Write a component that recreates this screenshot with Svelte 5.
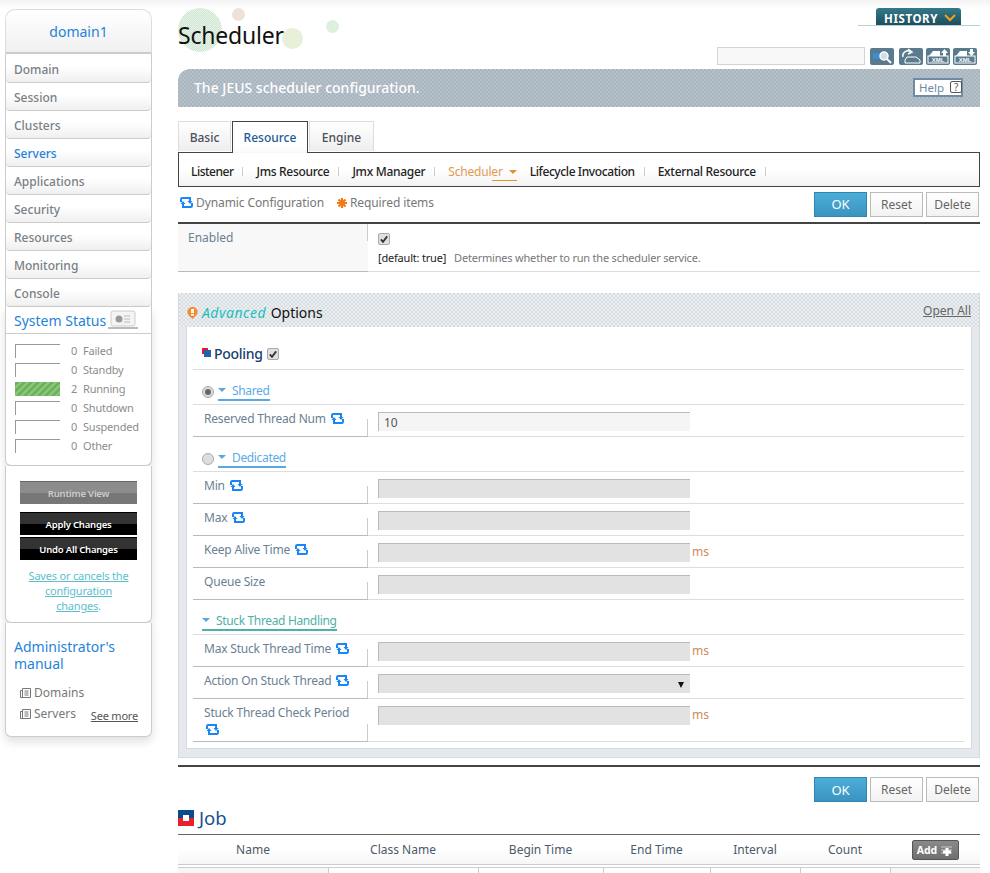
<script>
    const menu = ["Domain", "Session", "Clusters", "Servers", "Applications", "Security", "Resources", "Monitoring", "Console"];
    const statuses = [
        { count: 0, label: "Failed" },
        { count: 0, label: "Standby" },
        { count: 2, label: "Running", on: true },
        { count: 0, label: "Shutdown" },
        { count: 0, label: "Suspended" },
        { count: 0, label: "Other" }
    ];
    const subTabs = ["Listener", "Jms Resource", "Jmx Manager", "Scheduler", "Lifecycle Invocation", "External Resource"];
    const dedicated = [
        { label: "Min", dyn: true },
        { label: "Max", dyn: true },
        { label: "Keep Alive Time", dyn: true, unit: "ms" },
        { label: "Queue Size" }
    ];
    const columns = ["Name", "Class Name", "Begin Time", "End Time", "Interval", "Count"];
</script>

{#snippet sync()}
    <svg class="sync" viewBox="0 0 13 11" aria-hidden="true">
        <path d="M1 5V2.200Q1 1 2.200 1H10V4" fill="none" stroke="#1a86f5" stroke-width="2" />
        <path d="M12 6V8.800Q12 10 10.800 10H3V7" fill="none" stroke="#1a86f5" stroke-width="2" />
        <path d="M7.500 4H12.500L10 7ZM0.500 7H5.500L3 4Z" fill="#1a86f5" />
    </svg>
{/snippet}

{#snippet actions()}
    <div class="actions">
        <button class="btn ok">OK</button>
        <button class="btn">Reset</button>
        <button class="btn">Delete</button>
    </div>
{/snippet}

{#snippet check()}
    <span class="check">
        <svg viewBox="0 0 11 11" aria-hidden="true"><path d="M2 6l2.400 2.600L9 2.600" fill="none" stroke="#333" stroke-width="2" /></svg>
    </span>
{/snippet}

{#snippet docIcon()}
    <svg viewBox="0 0 11 10" aria-hidden="true"><path d="M0.500 2.500h2v7h-2zM2.500 0.500h8v9h-8zM4.500 3h4M4.500 5h4M4.500 7h4" fill="none" stroke="#777" /></svg>
{/snippet}

{#snippet xmlLabel()}
    <rect x="2" y="8" width="20" height="7" fill="#5a7a8e" stroke="#fff" />
    <text x="12" y="14" text-anchor="middle" font-size="6" font-weight="700" fill="#fff">XML</text>
{/snippet}

{#snippet field(label, dyn, unit, disabled = true, value = "", select = false)}
    <div class="row">
        <div class="label">
            <span>{label}</span>
            {#if dyn}{@render sync()}{/if}
        </div>
        <div class="value">
            <div class="input" class:disabled>
                {value}
                {#if select}<span class="caret"></span>{/if}
            </div>
            {#if unit}<span class="unit">{unit}</span>{/if}
        </div>
    </div>
{/snippet}

<div class="page">
    <aside class="side">
        <div class="domain">domain1</div>
        <nav>
            {#each menu as item}
                <div class="item" class:current={item === "Servers"}>{item}</div>
            {/each}
        </nav>
        <section class="panel status">
            <div class="status-head">
                <span>System Status</span>
                <svg viewBox="0 0 30 20" width="30" height="20" aria-hidden="true">
                    <rect x="3" y="1" width="24" height="15" rx="2" fill="#f4f4f4" stroke="#ccc" />
                    <circle cx="11" cy="9" r="3.500" fill="#999" />
                    <path d="M16 6h6M16 9h6M16 12h6" stroke="#bbb" />
                    <path d="M0 18h30" stroke="#bbb" stroke-width="2" />
                </svg>
            </div>
            <ul>
                {#each statuses as s}
                    <li>
                        <span class="bar" class:on={s.on}></span>
                        <span class="count">{s.count}</span>
                        <span>{s.label}</span>
                    </li>
                {/each}
            </ul>
        </section>
        <section class="panel changes">
            <div class="cmd grey">Runtime View</div>
            <div class="cmd black">Apply Changes</div>
            <div class="cmd black">Undo All Changes</div>
            <p><u>Saves or cancels the configuration changes</u>.</p>
        </section>
        <section class="panel manual">
            <h3>Administrator's manual</h3>
            <div class="doc">
                {@render docIcon()}
                Domains
            </div>
            <div class="doc last">
                <span class="doc-name">
                    {@render docIcon()}
                    Servers
                </span>
                <u class="more">See more</u>
            </div>
        </section>
    </aside>

    <main>
        <header>
            <div class="dot d1"></div>
            <div class="dot d2"></div>
            <div class="dot d3"></div>
            <div class="dot d4"></div>
            <h1>Scheduler</h1>
            <div class="head-right">
                <div class="history-wrap">
                    <div class="history">
                        HISTORY
                        <svg viewBox="0 0 12 8" width="12" height="8" aria-hidden="true"><path d="M1 1l5 5 5-5" fill="none" stroke="#f2a01e" stroke-width="2" /></svg>
                    </div>
                </div>
                <div class="tools">
                    <div class="search"></div>
                    <svg class="tool first" viewBox="0 0 24 17" aria-hidden="true">
                        <rect width="24" height="17" rx="2" fill="#5a7a8e" />
                        <rect x="3" y="5" width="7" height="6" fill="#3a8fd0" />
                        <circle cx="14" cy="8" r="4" fill="#cfe0ea" stroke="#fff" stroke-width="1.500" />
                        <path d="M17 11l4 4" stroke="#fff" stroke-width="2" />
                    </svg>
                    <svg class="tool" viewBox="0 0 24 17" aria-hidden="true">
                        <rect width="24" height="17" rx="2" fill="#5a7a8e" />
                        <path d="M4 9a5 5 0 0 1 8-5M9 1l4 3-4 2" fill="none" stroke="#fff" stroke-width="1.500" />
                        <path d="M8 9h9l4 3v3H6v-3z" fill="#5a7a8e" stroke="#fff" />
                    </svg>
                    <svg class="tool" viewBox="0 0 24 17" aria-hidden="true">
                        <rect width="24" height="17" rx="2" fill="#5a7a8e" />
                        <path d="M3 8l4-5h7v5M17 8V5h-2l3.500-4L22 5h-2v3" fill="#fff" />
                        {@render xmlLabel()}
                    </svg>
                    <svg class="tool" viewBox="0 0 24 17" aria-hidden="true">
                        <rect width="24" height="17" rx="2" fill="#5a7a8e" />
                        <path d="M3 8l4-5h7v5M17 1h3v3h2l-3.500 4L15 4h2z" fill="#fff" />
                        {@render xmlLabel()}
                    </svg>
                </div>
            </div>
        </header>

        <div class="banner">
            <span>The JEUS scheduler configuration.</span>
            <div class="help">Help <span class="q">?</span></div>
        </div>

        <div class="tabs">
            <div class="tab basic">Basic</div>
            <div class="tab active">Resource</div>
            <div class="tab engine">Engine</div>
        </div>
        <div class="subtabs">
            {#each subTabs as t}
                <div class="sub" class:sel={t === "Scheduler"}>
                    {#if t === "Scheduler"}
                        <span>{t}</span><span class="arrow"></span>
                    {:else}
                        <span>{t}</span><i></i>
                    {/if}
                </div>
            {/each}
        </div>

        <div class="legend-row">
            <div class="legend">
                {@render sync()}
                <span>Dynamic Configuration</span>
                <svg class="req" viewBox="0 0 10 10" aria-hidden="true"><path d="M5 0v10M0 5h10M1.500 1.500l7 7M8.500 1.500l-7 7" stroke="#f27a1a" stroke-width="2.200" /></svg>
                <span>Required items</span>
            </div>
            {@render actions()}
        </div>

        <div class="enabled">
            <div class="en-label">Enabled</div>
            <div class="en-value">
                {@render check()}
                <div class="hint"><b>[default: true]</b> &nbsp; Determines whether to run the scheduler service.</div>
            </div>
        </div>

        <section class="advanced">
            <div class="adv-head">
                <svg viewBox="0 0 11 13" width="11" height="13" aria-hidden="true">
                    <path d="M5.500 13L1.500 9A5 5 0 1 1 9.500 9Z" fill="#f28a2e" />
                    <rect x="4" y="3" width="3" height="4" fill="#fff" />
                    <rect x="4" y="8" width="3" height="1.500" fill="#fff" />
                </svg>
                <span class="adv-title"><em>Advanced</em> Options</span>
                <u class="open">Open All</u>
            </div>
            <div class="inner">
                <div class="pooling">
                    <span class="squares"><i></i><b></b></span>
                    <span class="pool-name">Pooling</span>
                    {@render check()}
                </div>

                <div class="group">
                    <span class="radio sel"></span>
                    <span class="group-title"><span class="down"></span>Shared</span>
                </div>
                {@render field("Reserved Thread Num", true, "", false, "10")}

                <div class="group">
                    <span class="radio"></span>
                    <span class="group-title"><span class="down"></span>Dedicated</span>
                </div>
                {#each dedicated as d}
                    {@render field(d.label, d.dyn, d.unit)}
                {/each}

                <div class="group">
                    <span class="group-title teal"><span class="down"></span>Stuck Thread Handling</span>
                </div>
                {@render field("Max Stuck Thread Time", true, "ms")}
                {@render field("Action On Stuck Thread", true, "", true, "", true)}
                <div class="tall">
                    {@render field("Stuck Thread Check Period", true, "ms")}
                </div>
            </div>
        </section>

        <div class="bottom-actions">
            {@render actions()}
        </div>

        <h2 class="job">
            <span class="job-icon"><i></i></span>
            Job
        </h2>
        <div class="table">
            {#each columns as c}
                <div class="th">{c}</div>
            {/each}
            <div class="th add-cell"><span class="add">Add
                <svg viewBox="0 0 13 13" width="13" height="13" aria-hidden="true">
                    <path d="M1 3h11M1 6h11M1 9h11" stroke="#ccc" />
                    <path d="M7 4v8M3 8h8" stroke="#fff" stroke-width="3" />
                </svg>
            </span></div>
            {#each [0, 1, 2, 3, 4, 5, 6] as i}
                <div class="td" class:shade={i === 0 || i === 6}></div>
            {/each}
        </div>
    </main>
</div>

<style>
    :global(body) {
        background: #fff;
        font-family: "Noto Sans", "Open Sans", sans-serif;
        font-size: 12px;
        color: #666;
    }

    .page {
        display: flex;
        height: 873px;
        overflow: hidden;
        padding: 9px 10px 0 5px;
        box-sizing: border-box;
        background: linear-gradient(#f3f3f3, #fff 9px);
    }

    .side {
        width: 147px;
        flex: none;
        margin-right: 26px;
    }

    .domain {
        height: 42px;
        line-height: 43px;
        text-align: center;
        font-size: 14px;
        color: #1f83d8;
        border: 1px solid #ddd;
        border-bottom: 2px solid #ccc;
        border-radius: 10px 10px 0 0;
        background: linear-gradient(#fff, #f0f0f0);
    }

    nav {
        padding-top: 1px;
        border-left: 1px solid #ccc;
        border-right: 1px solid #ccc;
    }

    .item {
        height: 27px;
        line-height: 29px;
        padding-left: 8px;
        font-weight: 500;
        color: #7a7f85;
        background: linear-gradient(#fff 40%, #f0f0f0);
        border-bottom: 1px solid #ccc;
        border-radius: 0 0 4px 4px;
    }

    .item.current {
        color: #1f83d8;
    }

    .panel {
        background: #fff;
        border: 1px solid #ccc;
        border-top: none;
        border-radius: 0 0 6px 6px;
        box-shadow: 0 5px 10px rgba(0, 0, 0, 0.12);
        position: relative;
    }

    .status-head {
        display: flex;
        align-items: center;
        gap: 2px;
        height: 26px;
        padding-left: 8px;
        font-size: 14px;
        color: #1f83d8;
        border-bottom: 1px solid #ccc;
    }

    ul {
        margin: 0;
        padding: 7px 0 10px 9px;
        list-style: none;
    }

    li {
        display: flex;
        align-items: center;
        height: 19px;
        font-size: 11px;
        letter-spacing: -0.2px;
        color: #8c8c8c;
    }

    .bar {
        width: 45px;
        height: 14px;
        box-sizing: border-box;
        border-top: 1px solid #999;
        border-left: 1px solid #999;
        margin-right: 11px;
    }

    .bar.on {
        border: none;
        background: repeating-linear-gradient(135deg, #6cb35c 0 3px, #8cc67e 3px 5px);
    }

    .count {
        width: 12px;
    }

    .changes {
        height: 157px;
        padding: 15px 14px 0;
        box-sizing: border-box;
        text-align: center;
    }

    .cmd {
        width: 117px;
        height: 22px;
        line-height: 24px;
        font-size: 9.500px;
        letter-spacing: -0.2px;
        font-weight: 600;
        color: #fff;
        white-space: nowrap;
    }

    .cmd.grey {
        color: #ccc;
        margin-bottom: 8px;
        border-top: 1px solid #666;
        background: linear-gradient(#8c8c8c 50%, #777 50%);
    }

    .cmd.black {
        margin-bottom: 2px;
        border-top: 1px solid #000;
        background: linear-gradient(#333 50%, #000 50%);
    }

    .changes p {
        margin: 8px 6px 0;
        font-size: 11px;
        letter-spacing: -0.2px;
        line-height: 15px;
        color: #5cc0cc;
    }

    .manual {
        height: 114px;
        padding: 15px 8px 0 8px;
        box-sizing: border-box;
    }

    h3 {
        margin: 0 0 10px;
        font-size: 14px;
        font-weight: 400;
        line-height: 17px;
        color: #1f83d8;
    }

    .doc {
        display: flex;
        align-items: center;
        gap: 3px;
        height: 21px;
        padding-left: 6px;
        color: #777;
    }

    .doc svg {
        width: 11px;
        height: 10px;
    }

    .doc.last {
        justify-content: space-between;
        padding-right: 5px;
    }

    .doc-name {
        display: flex;
        align-items: center;
        gap: 3px;
    }

    .more {
        font-size: 11px;
        letter-spacing: -0.2px;
        color: #555;
        margin-top: 4px;
    }

    main {
        width: 802px;
        flex: none;
    }

    header {
        position: relative;
        display: flex;
        justify-content: space-between;
        height: 60px;
    }

    .dot {
        position: absolute;
        border-radius: 50%;
    }

    .d1 {
        left: 0;
        top: -1px;
        width: 44px;
        height: 44px;
        background: repeating-conic-gradient(#cde6d2 0 25%, #e8f4ea 0 50%) 0 0 / 2px 2px;
    }

    .d2 {
        left: 54px;
        top: -1px;
        width: 13px;
        height: 13px;
        background: #eee2d8;
    }

    .d3 {
        left: 104px;
        top: 19px;
        width: 21px;
        height: 21px;
        background: #e8f0da;
    }

    .d4 {
        left: 148px;
        top: 11px;
        width: 13px;
        height: 13px;
        background: #ddf0dd;
    }

    h1 {
        position: relative;
        margin: 8px 0 0;
        font-size: 23px;
        letter-spacing: -0.2px;
        font-weight: 400;
        line-height: 36px;
        color: #111;
    }

    .head-right {
        display: flex;
        flex-direction: column;
        align-items: flex-end;
    }

    .history-wrap {
        width: 122px;
        margin-top: -1px;
        padding-left: 18px;
        box-sizing: border-box;
        border-bottom: 1px solid #b5d3d3;
    }

    .history {
        display: flex;
        align-items: center;
        gap: 6px;
        width: 85px;
        height: 17px;
        box-sizing: border-box;
        padding: 3px 0 0 8px;
        border-radius: 3px 3px 0 0;
        background: linear-gradient(#347a8a, #1e4d5e);
        color: #fff;
        font-size: 11.500px;
        font-weight: 700;
        letter-spacing: 0.6px;
    }

    .tools {
        display: flex;
        align-items: center;
        gap: 3px;
        margin-top: 21px;
        padding-right: 3px;
    }

    .search {
        width: 148px;
        height: 18px;
        box-sizing: border-box;
        border: 1px solid #d4d4d4;
        background: #f8f8f8;
        margin-right: 2px;
    }

    .tool {
        width: 24px;
        height: 17px;
    }

    .tool text {
        font-family: "Liberation Sans", sans-serif;
    }

    .tool.first {
        margin-right: 2px;
    }

    .banner {
        display: flex;
        align-items: center;
        justify-content: space-between;
        height: 38px;
        padding: 0 17px 2px 16px;
        box-sizing: border-box;
        border-radius: 12px 0 0 0;
        background: repeating-conic-gradient(#a8b4be 0 25%, #b6c1ca 0 50%) 0 0 / 4px 4px;
        color: #fff;
        font-size: 14px;
        font-weight: 500;
    }

    .help {
        display: flex;
        align-items: center;
        gap: 6px;
        width: 50px;
        height: 19px;
        box-sizing: border-box;
        padding-left: 4px;
        background: #fff;
        border: 2px solid #6f8ca6;
        color: #6f8ca6;
        font-size: 11.500px;
        font-weight: 400;
    }

    .q {
        flex: none;
        width: 12px;
        height: 12px;
        line-height: 10px;
        box-sizing: border-box;
        border: 1px solid #555;
        border-radius: 2px;
        text-align: center;
        font-size: 10px;
        color: #555;
    }

    .tabs {
        display: flex;
        gap: 1px;
        margin-top: 14px;
        position: relative;
        z-index: 1;
    }

    .tab {
        height: 30px;
        line-height: 31px;
        text-align: center;
        box-sizing: border-box;
        border: 1px solid #ddd;
        border-bottom: none;
        font-weight: 500;
        color: #4a4f5c;
        background: linear-gradient(#fff, #eee);
    }

    .basic {
        width: 53px;
    }

    .engine {
        width: 65px;
    }

    .tab.active {
        width: 76px;
        height: 32px;
        border: 1px solid #444;
        border-bottom: none;
        background: linear-gradient(#fff 80%, #f8f8f8);
        color: #1a5a96;
        margin-bottom: -1px;
    }

    .subtabs {
        display: flex;
        align-items: center;
        height: 35px;
        padding: 4px 0 0 12px;
        box-sizing: border-box;
        border: 1px solid #444;
        background: linear-gradient(#fff 50%, #f2f2f2);
        color: #222;
    }

    .sub {
        display: flex;
        align-items: center;
        white-space: nowrap;
        font-weight: 500;
        letter-spacing: -0.3px;
    }

    .sub:first-child {
        letter-spacing: -0.5px;
    }

    .sub:nth-child(5) {
        letter-spacing: -0.4px;
    }

    .sub i {
        width: 1px;
        height: 9px;
        margin: 0 13px 0 9px;
        background: #ccc;
    }

    .sub.sel {
        color: #e09a50;
        font-weight: 400;
        letter-spacing: -0.2px;
        margin-right: 13px;
    }

    .arrow {
        position: relative;
        width: 0;
        height: 0;
        margin-left: 6px;
        border: 4px solid transparent;
        border-top: 4px solid #e0922c;
        border-bottom: none;
    }

    .arrow::after {
        content: "";
        position: absolute;
        left: -21px;
        top: 6px;
        width: 25px;
        height: 1px;
        background: #e0922c;
    }

    .legend-row {
        display: flex;
        align-items: center;
        justify-content: space-between;
        height: 35px;
        padding: 0 1px 1px;
        box-sizing: border-box;
    }

    .legend {
        display: flex;
        align-items: center;
        gap: 3px;
        margin-top: -3px;
        letter-spacing: -0.1px;
        color: #777;
    }

    .req {
        width: 10px;
        height: 10px;
        margin-left: 10px;
    }

    .actions {
        display: flex;
        gap: 3px;
    }

    .btn {
        width: 53px;
        height: 25px;
        padding: 0;
        font: inherit;
        color: #666;
        background: linear-gradient(#fff, #f2f2f2);
        border: 1px solid #bbb;
    }

    .btn.ok {
        font-size: 13px;
        color: #fff;
        background: linear-gradient(#4caed8, #3a94c0);
        border-color: #2f86b0;
    }

    .enabled {
        display: flex;
        height: 50px;
        box-sizing: border-box;
        border-top: 2px solid #444;
        border-bottom: 1px solid #ddd;
    }

    .en-label {
        position: relative;
        width: 190px;
        padding: 5px 0 0 10px;
        box-sizing: border-box;
        background: #f8f8f8;
        color: #6a8094;
        border-bottom: 1px solid #bbb;
        margin-bottom: -1px;
    }

    .en-label::after {
        content: "";
        position: absolute;
        right: 0;
        top: 0;
        height: 17px;
        width: 1px;
        background: #ccc;
    }

    .en-value {
        padding: 9px 0 0 10px;
    }

    .check {
        display: block;
        width: 12px;
        height: 12px;
        box-sizing: border-box;
        border: 1px solid #aaa;
        border-radius: 2px;
        background: #e0e0e0;
    }

    .check svg {
        display: block;
        width: 10px;
        height: 10px;
    }

    .hint {
        margin-top: 5px;
        font-size: 11px;
        letter-spacing: -0.2px;
        color: #777;
        white-space: nowrap;
    }

    .hint b {
        font-weight: 400;
        color: #222;
    }

    .advanced {
        margin-top: 21px;
        height: 465px;
        box-sizing: border-box;
        border: 1px solid #d4dade;
        border-top: none;
        padding: 0 7px 7px;
        background: #e5e9ed;
    }

    .adv-head {
        display: flex;
        align-items: center;
        gap: 4px;
        height: 34px;
        margin: 0 -7px;
        padding: 4px 8px 0 8px;
        box-sizing: border-box;
        background: repeating-conic-gradient(#d8dee2 0 25%, #eceff1 0 50%) 0 0 / 4px 4px;
    }

    .adv-title {
        font-size: 14px;
        color: #111;
    }

    .adv-title em {
        margin-right: 1px;
        letter-spacing: 0.5px;
        color: #1cc0bc;
    }

    .open {
        margin: -4px 0 0 auto;
        color: #666;
    }

    .inner {
        height: 422px;
        padding: 0 7px 0 6px;
        box-sizing: border-box;
        background: #fff;
        border: 1px solid #d4dade;
        border-top: none;
    }

    .pooling {
        display: flex;
        align-items: center;
        gap: 4px;
        height: 43px;
        padding: 11px 0 0 9px;
        box-sizing: border-box;
        border-bottom: 1px solid #ddd;
        color: #16406e;
    }

    .pool-name {
        font-size: 14px;
        font-weight: 500;
        letter-spacing: -0.3px;
        margin-left: -1px;
    }

    .squares {
        position: relative;
        width: 9px;
        height: 9px;
        margin-top: -2px;
    }

    .squares i {
        position: absolute;
        left: 0;
        top: 0;
        width: 6px;
        height: 6px;
        background: #e01830;
    }

    .squares b {
        position: absolute;
        left: 2px;
        top: 2px;
        width: 7px;
        height: 7px;
        background: #1c66ae;
    }

    .group {
        display: flex;
        align-items: flex-end;
        gap: 4px;
        height: 35px;
        padding: 0 0 3px 9px;
        box-sizing: border-box;
        border-bottom: 1px solid #ddd;
    }

    .radio {
        width: 12px;
        height: 12px;
        margin-bottom: 3px;
        box-sizing: border-box;
        border: 1px solid #aaa;
        border-radius: 50%;
        background: #ddd;
        position: relative;
    }

    .radio.sel::after {
        content: "";
        position: absolute;
        left: 2px;
        top: 2px;
        width: 6px;
        height: 6px;
        border-radius: 50%;
        background: #666;
    }

    .group-title {
        display: inline-flex;
        align-items: center;
        height: 18px;
        letter-spacing: -0.35px;
        color: #5ea9e8;
        border-bottom: 2px solid #58a8e4;
    }

    .group-title.teal {
        color: #4fb0a8;
        border-color: #4fb0a8;
    }

    .down {
        width: 0;
        height: 0;
        margin-right: 6px;
        border: 4px solid transparent;
        border-top: 4px solid #58a8e4;
        border-bottom: none;
    }

    .row {
        display: flex;
        height: 32px;
        box-sizing: border-box;
        border-bottom: 1px solid #ddd;
    }

    .tall .row {
        height: 43px;
    }

    .label {
        position: relative;
        width: 175px;
        flex: none;
        padding: 5px 10px 0 11px;
        box-sizing: border-box;
        letter-spacing: -0.2px;
        color: #6a8094;
        line-height: 17px;
        border-bottom: 1px solid #bbb;
        margin-bottom: -1px;
    }

    .label::after {
        content: "";
        position: absolute;
        right: 0;
        bottom: 0;
        width: 1px;
        height: 17px;
        background: #ccc;
    }

    .sync {
        display: inline-block;
        width: 13px;
        height: 11px;
        margin-left: 2px;
        vertical-align: -1px;
    }

    .legend .sync {
        margin-left: 1px;
    }

    .value {
        display: flex;
        align-items: flex-start;
        padding: 7px 0 0 10px;
        gap: 2px;
    }

    .input {
        position: relative;
        width: 312px;
        height: 19px;
        line-height: 20px;
        box-sizing: border-box;
        padding-left: 5px;
        border-top: 1px solid #bbb;
        border-left: 1px solid #bbb;
        background: #f5f5f5;
        color: #555;
    }

    .input.disabled {
        background: #e2e2e2;
    }

    .caret {
        position: absolute;
        right: 6px;
        top: 7px;
        border: 3.500px solid transparent;
        border-top: 6px solid #111;
        border-bottom: none;
    }

    .unit {
        color: #d08a5c;
    }

    .bottom-actions {
        display: flex;
        justify-content: flex-end;
        height: 36px;
        margin-top: 7px;
        padding: 10px 1px 0 0;
        box-sizing: border-box;
        border-top: 2px solid #444;
    }

    .job {
        display: flex;
        align-items: center;
        gap: 5px;
        height: 33px;
        margin: 0;
        font-size: 18.500px;
        font-weight: 400;
        color: #16508e;
    }

    .job-icon {
        display: flex;
        align-items: center;
        justify-content: center;
        width: 16px;
        height: 16px;
        background: linear-gradient(#0c4a8c 50%, #e8202c 50%);
    }

    .job-icon i {
        width: 6px;
        height: 6px;
        background: #fff;
    }

    .table {
        display: grid;
        grid-template-columns: 150px 150px 125px 107px 90px 90px 90px;
        border-top: 1px solid #666;
    }

    .th {
        height: 33px;
        line-height: 30px;
        text-align: center;
        box-sizing: border-box;
        color: #4a5a6a;
        background: linear-gradient(#fff 50%, #f6f6f6);
        border-bottom: 4px double #ccc;
    }

    .add-cell {
        display: flex;
        justify-content: center;
        align-items: flex-start;
        padding-top: 5px;
    }

    .add {
        display: flex;
        align-items: center;
        justify-content: center;
        gap: 3px;
        width: 47px;
        height: 20px;
        border: 1px solid #555;
        border-radius: 2px;
        box-sizing: border-box;
        background: linear-gradient(#8a8a8a, #6f6f6f);
        color: #fff;
        font-size: 10.500px;
        font-weight: 700;
    }

    .td {
        height: 20px;
        border-left: 1px solid #ccc;
    }

    .td.shade {
        background: #f6f6f6;
    }

    .td:nth-child(8) {
        border-left: none;
    }
</style>
